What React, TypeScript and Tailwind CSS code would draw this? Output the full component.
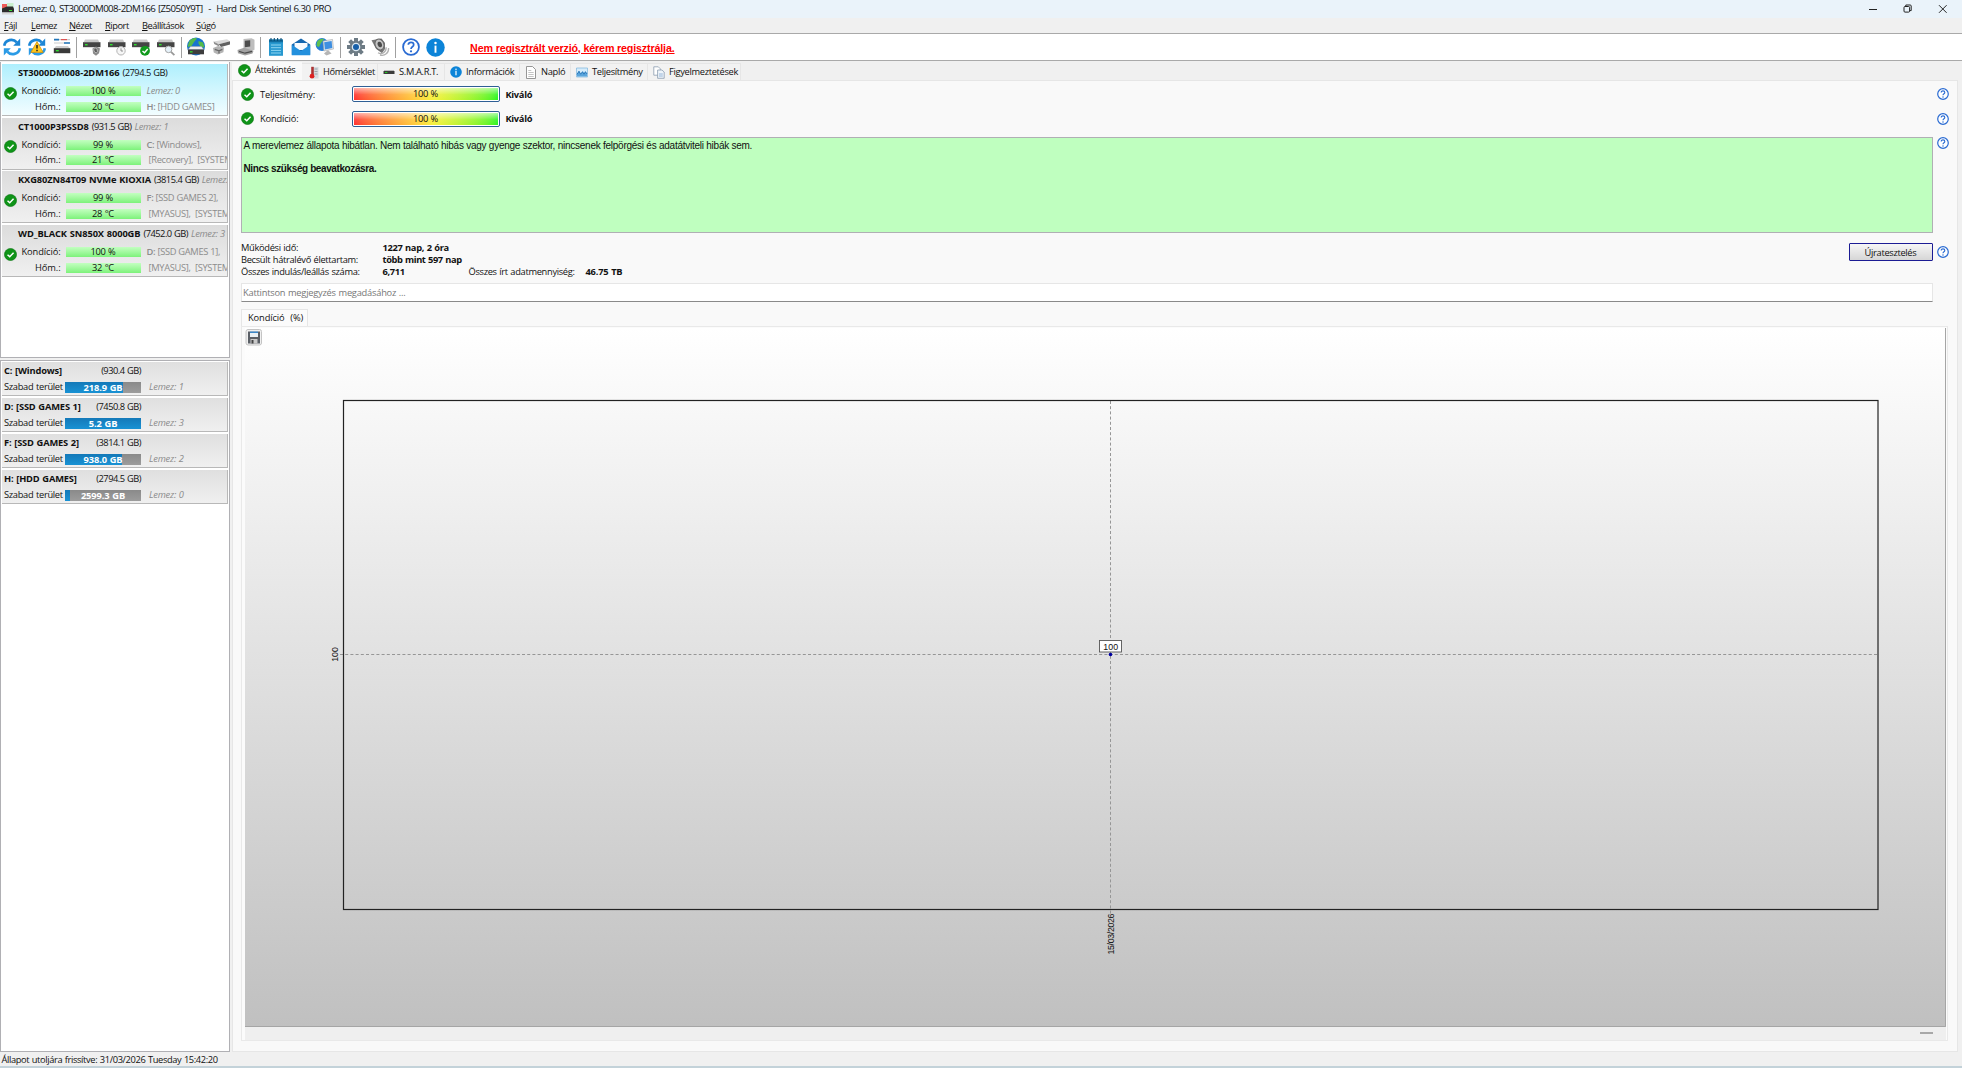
import React from 'react'

type Disk = {
  name: string
  size: string
  tag?: string
  health: string
  temp: string
  letter: string
  label: string
  extra?: string
  active?: boolean
}

const disks: Disk[] = [
  { name: 'ST3000DM008-2DM166', size: '(2794.5 GB)', health: '100 %', temp: '20 °C', letter: 'H:', label: '[HDD GAMES]', active: true },
  { name: 'CT1000P3PSSD8', size: '(931.5 GB)', tag: 'Lemez: 1', health: '99 %', temp: '21 °C', letter: 'C:', label: '[Windows],', extra: '[Recovery],  [SYSTEM]' },
  { name: 'KXG80ZN84T09 NVMe KIOXIA', size: '(3815.4 GB)', tag: 'Lemez: 2', health: '99 %', temp: '28 °C', letter: 'F:', label: '[SSD GAMES 2],', extra: '[MYASUS],  [SYSTEM]' },
  { name: 'WD_BLACK SN850X 8000GB', size: '(7452.0 GB)', tag: 'Lemez: 3', health: '100 %', temp: '32 °C', letter: 'D:', label: '[SSD GAMES 1],', extra: '[MYASUS],  [SYSTEM]' },
]

const volumes = [
  { name: 'C: [Windows]', size: '(930.4 GB)', free: '218.9 GB', used: 76.5, disk: 'Lemez: 1' },
  { name: 'D: [SSD GAMES 1]', size: '(7450.8 GB)', free: '5.2 GB', used: 100, disk: 'Lemez: 3' },
  { name: 'F: [SSD GAMES 2]', size: '(3814.1 GB)', free: '938.0 GB', used: 75, disk: 'Lemez: 2' },
  { name: 'H: [HDD GAMES]', size: '(2794.5 GB)', free: '2599.3 GB', used: 7, disk: 'Lemez: 0' },
]

const menu = [
  { text: 'Fájl', cls: 'w-[27px]' },
  { text: 'Lemez', cls: 'w-[38px]' },
  { text: 'Nézet', cls: 'w-[36px]' },
  { text: 'Riport', cls: 'w-[37px]' },
  { text: 'Beállítások', cls: 'w-[54px]' },
  { text: 'Súgó', cls: 'w-[30px]' },
]

function Check({ size = 14 }: { size?: number }) {
  return (
    <svg width={size} height={size} viewBox="0 0 14 14" className="shrink-0">
      <circle cx="7" cy="7" r="6.5" fill="#0f9418" stroke="#08750f" strokeWidth="0.7" />
      <path d="M3.8 7.2 6.2 9.4 10.3 5" fill="none" stroke="#fff" strokeWidth="1.6" />
    </svg>
  )
}

function Help({ size = 12 }: { size?: number }) {
  return (
    <svg width={size} height={size} viewBox="0 0 20 20" className="shrink-0">
      <circle cx="10" cy="10" r="8.8" fill="#fff" stroke="#2a6bd2" strokeWidth="2" />
      <path d="M7 7.6C7 3.8 13 4 13 7.4 13 9.8 10 9.6 10 12.2" fill="none" stroke="#2a6bd2" strokeWidth="1.9" />
      <circle cx="10" cy="14.8" r="1.25" fill="#2a6bd2" />
    </svg>
  )
}

function Info({ size = 19 }: { size?: number }) {
  return (
    <svg width={size} height={size} viewBox="0 0 20 20" className="shrink-0">
      <circle cx="10" cy="10" r="9.7" fill="#0c84d8" />
      <circle cx="10" cy="5.3" r="1.3" fill="#fff" />
      <path d="M10 8v7.5" stroke="#fff" strokeWidth="2" />
    </svg>
  )
}

function Svg({ children }: { children: React.ReactNode }) {
  return (
    <svg width="20" height="20" viewBox="0 0 20 20" className="shrink-0">
      {children}
    </svg>
  )
}

const syncArrows = (
  <>
    <path d="M2.2 8.8C3.2 2.6 11 1 14.8 5.4" fill="none" stroke="#1c86d6" strokeWidth="2.6" />
    <path d="M18.2 1.6v7.2h-7z" fill="#1c86d6" />
    <path d="M17.8 11.2C16.8 17.4 9 19 5.2 14.6" fill="none" stroke="#2b9be6" strokeWidth="2.6" />
    <path d="M1.8 18.4v-7.2h7z" fill="#2b9be6" />
  </>
)

const drive = (
  <>
    <path d="M3 2.5h13l1.5 3H1.5z" fill="#c9c9c9" />
    <path d="M1 5.2h17.5v5H1z" fill="#454545" />
    <path d="M3 7h2.6v1.4H3z" fill="#2fe02f" />
  </>
)

const toolbar: (React.ReactNode | null)[] = [
  <Svg>{syncArrows}</Svg>,
  <Svg>
    {syncArrows}
    <path d="M10 4.6 16.2 15.4H3.8z" fill="#ffc61a" stroke="#d08a00" strokeWidth="0.7" />
    <path d="M10 8v3.6M10 12.8v1.5" stroke="#222" strokeWidth="1.5" />
  </Svg>,
  <Svg>
    <path d="M2 2.6h16M2 6h16" stroke="#ccc" strokeWidth="1.2" />
    <path d="M2 2.6h5M12 6h6" stroke="#2277bb" strokeWidth="1.6" />
    <path d="M9 2.6h6" stroke="#d55" strokeWidth="1.2" />
    <path d="M4 9h12l2 2.5H2z" fill="#d0d0d0" />
    <path d="M1.8 11.2h16.5v5H1.8z" fill="#3a3a3a" />
    <path d="M3.8 13h3v1.4h-3z" fill="#2fe02f" />
  </Svg>,
  null,
  <Svg>
    {drive}
    <path d="M10.5 11.5l3.5-2 4 2-1 4.8-3 2.4-3-2.2z" fill="#8a8a8a" />
    <ellipse cx="13.6" cy="13.3" rx="1.7" ry="2.5" fill="#5c5c5c" stroke="#c9c9c9" strokeWidth="0.7" transform="rotate(-20 13.6 13.3)" />
  </Svg>,
  <Svg>
    {drive}
    <circle cx="14" cy="13.8" r="4.2" fill="#f6f6f6" stroke="#b4b4b4" />
    <path d="M14 11.3v2.7h2" fill="none" stroke="#888" strokeWidth="0.9" />
  </Svg>,
  <Svg>
    {drive}
    <circle cx="14" cy="13.8" r="4.9" fill="#109a1c" />
    <path d="M11.5 14l2 1.8 3.2-3.8" fill="none" stroke="#fff" strokeWidth="1.4" />
  </Svg>,
  <Svg>
    {drive}
    <circle cx="12.6" cy="12.4" r="3.3" fill="#e6f2fa" stroke="#a5a5a5" />
    <path d="M15 14.8l3.4 3.4" stroke="#999" strokeWidth="1.8" />
  </Svg>,
  null,
  <Svg>
    <circle cx="10" cy="9.4" r="9" fill="#1873cf" />
    <path d="M3 5C5 1 9 .5 11 1.5L8 5 5.5 9 1.5 10zM12.5 4l4.5 1.5 1.5 5-4-1-2-3z" fill="#55bb4a" />
    <path d="M4.5 9.5h11l2.5 3.2H2z" fill="#efefef" stroke="#999" strokeWidth="0.4" />
    <path d="M2 12.5h16v4.8H2z" fill="#3d3d3d" />
    <path d="M4 14.2h2.6v1.3H4z" fill="#2fe02f" />
  </Svg>,
  <Svg>
    <path d="M2.5 4.5 16 2.2l3 2-11 3z" fill="#d8d8d8" />
    <path d="M7.8 7.2l11.2-3v3.2L10 10z" fill="#606060" />
    <path d="M2.5 4.5l5.3 2.7.4 2.4-5-2.6z" fill="#8e8e8e" />
    <path d="M2 11l5-2 6 1.6-.6 4.6-5.6 2.4-4-2.2z" fill="#b4b4b4" />
    <path d="M3.8 12.4l4.2 1.4 3.4-1.4M8 13.8v2.6" fill="none" stroke="#666" strokeWidth="1.3" />
  </Svg>,
  <Svg>
    <path d="M7.5 2l8-.8 3 1.6v10l-5.5 1.4-5.5-2z" fill="#bdbdbd" />
    <path d="M8.8 3.8l5.4-.6v6.2l-5.4.8z" fill="#4c4c4c" />
    <path d="M1.5 13l6.5-2.2 9.5 3-1 2.8-7.5 2-7-2.4z" fill="#a2a2a2" />
    <path d="M3 14.4l6 1.8 7-1.8" fill="none" stroke="#4a4a4a" strokeWidth="1.2" />
  </Svg>,
  null,
  <Svg>
    <path d="M3 2.5h14v16.3H3z" fill="#2798cf" />
    <path d="M3 2.5h14v2.8H3z" fill="#106c9e" />
    <path d="M5 1v3M8.3 1v3M11.6 1v3M15 1v3" stroke="#0b4d75" strokeWidth="1.1" />
    <path d="M5 8h10M5 10.7h10M5 13.4h10M5 16h10" stroke="#9bdcf5" strokeWidth="0.9" />
  </Svg>,
  <Svg>
    <path d="M.8 7.6 10 1.4l9.2 6.2v10.2H.8z" fill="#1467b0" />
    <path d="M3.5 6h13v7h-13z" fill="#f7fbff" />
    <path d="M.8 7.8 10 14l9.2-6.2v10.4H.8z" fill="#2390dd" />
  </Svg>,
  <Svg>
    <circle cx="7" cy="7.5" r="6.4" fill="#267ed6" />
    <path d="M2 5c2-3.5 5-3.8 7-3L6 6l-2 4-2.5-1z" fill="#5fc04f" />
    <path d="M8 4l9.5-1.6 1 9.6-9.6 2z" fill="#e3e9ef" stroke="#999" strokeWidth="0.5" />
    <path d="M9.2 5.2l7.4-1.2.7 7-7.4 1.5z" fill="#3f8fe0" />
    <path d="M13 13l3.5 3.6-5 2-2.5-2z" fill="#b5b5b5" />
  </Svg>,
  null,
  <Svg>
    <path d="M8 1h4v18H8zM1 8h18v4H1z" fill="#6d7b85" />
    <path d="M8 1h4v18H8zM1 8h18v4H1z" fill="#6d7b85" transform="rotate(45 10 10)" />
    <circle cx="10" cy="10" r="5.3" fill="#dce9f2" stroke="#6d7b85" strokeWidth="2" />
    <circle cx="10" cy="10" r="3" fill="#175fa8" />
  </Svg>,
  <Svg>
    <path d="M1.5 3.2l10-1.8 3.5 4.6v6l-3 4.2-6-4.5z" fill="#777" />
    <ellipse cx="9.5" cy="7.5" rx="4.4" ry="5.6" fill="#c4c4c4" stroke="#666" transform="rotate(-20 9.5 7.5)" />
    <ellipse cx="9.8" cy="7.5" rx="2.1" ry="2.9" fill="#4a4a4a" transform="rotate(-20 9.8 7.5)" />
    <path d="M8 15.8c4 2.2 8.4-.8 8.2-5.6M10 18c5 1.3 8.8-2 8.6-7" fill="none" stroke="#b0b0b0" strokeWidth="1.3" />
  </Svg>,
  null,
  <Help size={18} />,
  <Info size={19} />,
]

function Toolbar() {
  return (
    <div className="flex h-[28px] shrink-0 items-center border-y border-[#a9a9a9] bg-white">
      {toolbar.map((icon, i) =>
        icon ? (
          <div key={i} className="flex w-[24.66px] shrink-0 justify-center">{icon}</div>
        ) : (
          <div key={i} className="flex w-[5.7px] shrink-0 justify-center">
            <div className="h-[21px] w-px bg-[#a0a0a0]" />
          </div>
        ),
      )}
      <a className="ml-[22.5px] mt-[3px] font-['Liberation_Sans'] text-[10.7px] font-bold leading-none tracking-[-0.15px] text-[#f00] underline [word-spacing:0]">
        Nem regisztrált verzió, kérem regisztrálja.
      </a>
    </div>
  )
}

function GreenBar({ children }: { children: React.ReactNode }) {
  return (
    <div className="ml-[5px] h-[10px] w-[75px] bg-linear-to-b from-[#c2ffc0] to-[#7cf27a] text-center leading-[10px]">
      {children}
    </div>
  )
}

function DiskCard({ disk }: { disk: Disk }) {
  return (
    <div
      className={`mb-[1.7px] h-[52px] overflow-hidden whitespace-pre border-b border-r border-[#b8b8b8] ${
        disk.active ? 'bg-linear-to-b from-[#aeeffd] to-[#f2fdff]' : 'bg-linear-to-b from-[#dcdcdc] to-[#f0f0f0]'
      }`}
    >
      <div className="flex h-[17px] items-center gap-[3px] pl-[16px]">
        <b className="tracking-[-0.1px]">{disk.name}</b>
        <span className="tracking-[-0.5px]">{disk.size}</span>
        {disk.tag && <i className="text-[#8c8c8c]">{disk.tag}</i>}
      </div>
      <div className="flex h-[32px] pl-[1.5px] pt-[2px]">
        <div className="flex w-[13px] shrink-0 items-center pb-[10px]">
          <Check size={13} />
        </div>
        <div className="w-[44px] shrink-0 text-right leading-[15.5px] tracking-[-0.1px]">
          <div>Kondíció:</div>
          <div>Hőm.:</div>
        </div>
        <div className="flex shrink-0 flex-col gap-[5.5px] pt-[3px]">
          <GreenBar>{disk.health}</GreenBar>
          <GreenBar>{disk.temp}</GreenBar>
        </div>
        <div className="ml-[6px] leading-[15.5px] tracking-[-0.3px] text-[#8c8c8c] [word-spacing:0]">
          {disk.extra ? (
            <>
              <div><b className="font-semibold">{disk.letter}</b> {disk.label}</div>
              <div className="pl-[2px]">{disk.extra}</div>
            </>
          ) : (
            <>
              <div className="italic">Lemez: 0</div>
              <div><b className="font-semibold">{disk.letter}</b> {disk.label}</div>
            </>
          )}
        </div>
      </div>
    </div>
  )
}

function VolumeCard({ volume }: { volume: (typeof volumes)[number] }) {
  return (
    <div className="mb-[2px] h-[34px] border-b border-r border-[#b8b8b8] bg-linear-to-b from-[#dfdfdf] to-[#f0f0f0] pl-[2px]">
      <div className="flex h-[17px] w-[137px] items-center justify-between">
        <b className="tracking-[-0.15px]">{volume.name}</b>
        <span className="tracking-[-0.5px]">{volume.size}</span>
      </div>
      <div className="flex h-[16px] items-center">
        <span className="w-[61px] shrink-0 whitespace-nowrap tracking-[-0.3px]">Szabad terület</span>
        <div className="relative h-[11px] w-[76px] shrink-0 bg-linear-to-b from-[#8a8a8a] to-[#9c9c9c]">
          <div className="h-full bg-linear-to-b from-[#1479b8] to-[#1992d4]" style={{ width: `${volume.used}%` }} />
          <b className="absolute inset-0 text-center leading-[11px] tracking-[-0.1px] text-white">{volume.free}</b>
        </div>
        <i className="ml-[8px] tracking-[-0.2px] text-[#8c8c8c]">{volume.disk}</i>
      </div>
    </div>
  )
}

function Sidebar() {
  return (
    <aside className="flex w-[230px] shrink-0 flex-col gap-[2px]">
      <div className="h-[296px] border border-t-0 border-[#b0b0b4] bg-white pl-px pr-px pt-[2px]">
        {disks.map((d) => <DiskCard key={d.name} disk={d} />)}
      </div>
      <div className="flex-1 border border-[#b0b0b4] bg-white pl-px pr-px pt-px">
        {volumes.map((v) => <VolumeCard key={v.name} volume={v} />)}
      </div>
    </aside>
  )
}

const tabs = [
  {
    text: 'Hőmérséklet',
    cls: 'w-[76px]',
    icon: (
      <svg width="12" height="13" viewBox="1 0 12 13" className="shrink-0">
        <path d="M7 1h5.5v11.5H7z" fill="#d4dade" />
        <path d="M8.5 3h3M8.5 5.5h3M8.5 8h3" stroke="#8d979e" strokeWidth="0.8" />
        <path d="M6.5.8v8" stroke="#a33" strokeWidth="2.6" />
        <circle cx="6" cy="10.2" r="2.4" fill="#d22" />
      </svg>
    ),
  },
  {
    text: 'S.M.A.R.T.',
    cls: 'w-[67px]',
    icon: (
      <svg width="12" height="13" viewBox="0 0 12 13" className="shrink-0">
        <path d="M1 4h10v1H1z" fill="#bbb" />
        <path d="M.5 5h11v3H.5z" fill="#3c3c3c" />
        <path d="M2 6h2.4v1H2z" fill="#2c2" />
      </svg>
    ),
  },
  { text: 'Információk', cls: 'w-[75px]', icon: <Info size={12} /> },
  {
    text: 'Napló',
    cls: 'w-[51px]',
    icon: (
      <svg width="12" height="13" viewBox="0 0 12 13" className="shrink-0">
        <path d="M1.5.5h6l3 3v9h-9z" fill="#fff" stroke="#8a8a8a" strokeWidth="0.9" />
        <path d="M3.3 4.5h3M3.3 6.5h5.4M3.3 8.5h5.4M3.3 10.5h5.4" stroke="#aaa" strokeWidth="0.7" />
      </svg>
    ),
  },
  {
    text: 'Teljesítmény',
    cls: 'w-[77px]',
    icon: (
      <svg width="12" height="13" viewBox="0 0 12 13" className="shrink-0">
        <path d="M.5 2h11v9H.5z" fill="#d5ecfb" stroke="#7db4dc" strokeWidth="0.7" />
        <path d="M1 10.6V8l2-3 1.6 3 2-2.5L8 8l1.4-2.5L11 8v2.6z" fill="#5aa5dc" />
        <path d="M1 8.4l2-3.2 1.6 3 2-2.5L8 8.2l1.4-2.5L11 8" fill="none" stroke="#1d6fb5" strokeWidth="0.9" />
      </svg>
    ),
  },
  {
    text: 'Figyelmeztetések',
    cls: 'w-[93px]',
    icon: (
      <svg width="12" height="13" viewBox="0 0 12 13" className="shrink-0">
        <path d="M.8.8h4.5l2 2v6.4H.8z" fill="#fff" stroke="#8a9cb0" strokeWidth="0.8" />
        <path d="M4.6 4h4.3l2.3 2v6.3H4.6z" fill="#eef4fa" stroke="#8a9cb0" strokeWidth="0.8" />
        <path d="M6 8h3.8M6 10h3.8" stroke="#7fa6d0" strokeWidth="0.8" />
      </svg>
    ),
  },
]

function Tabs() {
  return (
    <div className="flex h-[18px] items-end">
      <div className="flex h-[18px] w-[70px] items-center gap-[4px] bg-[#f9f9f9] pb-[2px] pl-[6px]">
        <Check size={13} />
        <span>Áttekintés</span>
      </div>
      {tabs.map((t) => (
        <div key={t.text} className={`flex h-[17px] shrink-0 items-center gap-[4px] border-r border-t border-[#e6e6e6] bg-[#f2f2f2] pl-[5px] ${t.cls}`}>
          {t.icon}
          <span>{t.text}</span>
        </div>
      ))}
    </div>
  )
}

function Meter({ label }: { label: string }) {
  return (
    <div className="flex h-[24.5px] items-center">
      <Check size={13} />
      <span className="ml-[6px] w-[91.5px] tracking-[-0.15px]">{label}</span>
      <div className="h-[16px] w-[148px] rounded-[2px] border border-[#2f5f95] bg-white p-px">
        <div className="h-full bg-linear-to-r from-[#ff3030] via-[#f6f03c] via-55% to-[#22f522]">
          <div className="h-full bg-linear-to-b from-white/60 via-white/10 via-55% to-transparent text-center leading-[12px]">100 %</div>
        </div>
      </div>
      <b className="ml-[6px]">Kiváló</b>
      <div className="ml-auto mr-[8.5px]"><Help /></div>
    </div>
  )
}

function Chart() {
  return (
    <svg width="1701" height="699" viewBox="245 328 1701 699" className="block">
      <defs>
        <linearGradient id="bg" x1="0" y1="0" x2="0" y2="1">
          <stop offset="0" stopColor="#ffffff" />
          <stop offset="1" stopColor="#c0c0c0" />
        </linearGradient>
      </defs>
      <rect x="245" y="328" width="1701" height="699" fill="url(#bg)" />
      <path d="M1945.5 328V1026.5H245" fill="none" stroke="#a5a5a5" />
      <rect x="246" y="329.5" width="15.5" height="15.5" rx="2" fill="#f0f0f0" stroke="#c4c4c4" />
      <path d="M248 331.5h12v12h-12z" fill="#5a5f66" />
      <path d="M250 331.5h8v5.5h-8z" fill="#e8f0f6" />
      <path d="M250 331.5h8v1.5h-8z" fill="#3a86c8" />
      <path d="M250.5 339h7v4.5h-7z" fill="#c9c9c9" />
      <path d="M251.5 340h2v3.5h-2z" fill="#444" />
      <path d="M340 654.5H1878M1110.5 401V914" stroke="#969696" strokeDasharray="3 2.2" />
      <rect x="343.5" y="400.5" width="1534.5" height="509" fill="none" stroke="#222" strokeWidth="1.2" />
      <rect x="1099.5" y="640.5" width="22" height="11.5" fill="#fff" stroke="#555" strokeWidth="0.9" />
      <circle cx="1110.5" cy="654.5" r="1.8" fill="#0000a0" />
      <g fontFamily="Liberation Sans, sans-serif" fontSize="8.8" fill="#111" letterSpacing="0">
        <text x="1110.7" y="649.6" textAnchor="middle">100</text>
        <text transform="translate(338.2 654.5) rotate(-90)" textAnchor="middle">100</text>
        <text transform="translate(1113.5 954.5) rotate(-90)" textLength="41">15/03/2026</text>
      </g>
    </svg>
  )
}

function Overview() {
  return (
    <div className="flex flex-1 flex-col border border-[#e6e6e6] bg-[#f9f9f9] pl-[8px] pt-px">
      <Meter label="Teljesítmény:" />
      <Meter label="Kondíció:" />
      <div className="mt-[5.5px] flex items-start">
        <div className="h-[96px] w-[1692px] border border-[#b0b0b4] bg-[#bfffbf] pl-[1.5px] pt-[2px] font-['Liberation_Sans'] text-[10px] leading-[11.6px] [word-spacing:0]">
          <p className="tracking-[-0.25px]">A merevlemez állapota hibátlan. Nem található hibás vagy gyenge szektor, nincsenek felpörgési és adatátviteli hibák sem.</p>
          <p className="mt-[11.5px] font-bold tracking-[-0.4px]">Nincs szükség beavatkozásra.</p>
        </div>
        <div className="ml-[4px]"><Help /></div>
      </div>
      <div className="flex h-[50px] pt-[9px]">
        <div className="grid h-[37px] grid-cols-[141.5px_86px_117px_1fr] leading-[12.2px] whitespace-nowrap">
          <span>Működési idő:</span>
          <b>1227 nap, 2 óra</b>
          <span />
          <span />
          <span>Becsült hátralévő élettartam:</span>
          <b className="tracking-[-0.4px]">több mint 597 nap</b>
          <span />
          <span />
          <span>Összes indulás/leállás száma:</span>
          <b>6,711</b>
          <span>Összes írt adatmennyiség:</span>
          <b className="tracking-[-0.2px]">46.75 TB</b>
        </div>
        <div className="ml-auto mr-[8.5px] flex h-[18px] items-center gap-[4px] pt-[3px]">
          <button className="h-[18px] w-[84px] rounded-[1px] border border-[#1c1c94] bg-linear-to-b from-[#f6f6f6] to-[#d6d6d6] leading-[15px]">
            Újratesztelés
          </button>
          <Help />
        </div>
      </div>
      <div className="h-[19px] w-[1692px] border border-[#e6e6e6] border-b-[#8a8a8a] bg-white pl-[1px] leading-[17px] tracking-[-0.23px] text-[#777]">
        Kattintson megjegyzés megadásához ...
      </div>
      <div className="mt-[7.5px] h-[17px] w-[67px] border border-b-0 border-[#e6e6e6] bg-[#fbfbfb] pl-[6px] leading-[15px] tracking-[-0.1px] whitespace-pre">
        Kondíció  (%)
      </div>
      <div className="w-[1707px] border border-[#e9e9e9] bg-[#fbfbfb] pl-[3px] pt-px">
        <Chart />
        <div className="flex h-[13px] w-[1701px] items-center justify-end bg-[#efefef] pb-px pr-[13px]">
          <div className="h-[2px] w-[13px] bg-[#a8a8a8]" />
        </div>
      </div>
    </div>
  )
}

export default function App() {
  return (
    <div className="flex h-[1068px] w-[1962px] flex-col overflow-hidden bg-[#f0f0f0] font-['Open_Sans','Noto_Sans',sans-serif] text-[9.3px] leading-none tracking-[-0.32px] text-[#111] [word-spacing:0.5px]">
      <header className="flex h-[18px] shrink-0 items-center bg-[#eaf3fa]">
        <svg width="12" height="13" viewBox="0 0 12 13" className="ml-[2px]">
          <path d="M0 1h5v5H0z" fill="#ee5a5a" />
          <path d="M5 0h6.5v6H5z" fill="#c9efcf" />
          <path d="M0 5.5l5-2h6l1 2.5v3.5H0z" fill="#2c2c2c" />
          <path d="M0 9.5h12v2H0z" fill="#d7d7d7" />
          <path d="M7 7h3v1H7z" fill="#3d3" />
        </svg>
        <span className="ml-[4px] whitespace-pre text-[9.7px] tracking-[-0.56px] [word-spacing:0.8px]">Lemez: 0, ST3000DM008-2DM166 [Z5050Y9T]  -  Hard Disk Sentinel 6.30 PRO</span>
        <svg width="90" height="16" viewBox="0 0 90 16" className="ml-auto mr-[10px]" fill="none" stroke="#222" strokeWidth="1">
          <path d="M7 8.5h8" />
          <rect x="42" y="5.5" width="5.6" height="5.6" rx="1" />
          <path d="M43.8 5.4V4h4.4q1 0 1 1v4.6h-1.4" />
          <path d="M77 4.2l7.6 7.6M84.6 4.2 77 11.8" />
        </svg>
      </header>
      <nav className="flex h-[15px] shrink-0 items-center pl-[4px] tracking-[-0.45px]">
        {menu.map((m) => (
          <span key={m.text} className={m.cls}>
            <u>{m.text[0]}</u>{m.text.slice(1)}
          </span>
        ))}
      </nav>
      <Toolbar />
      <main className="flex flex-1 gap-[2px] pt-px">
        <Sidebar />
        <section className="flex w-[1726px] flex-col">
          <Tabs />
          <Overview />
        </section>
      </main>
      <footer className="h-[16px] shrink-0 border-b-2 border-[#c3d2d9] pl-[1.5px] leading-[15px] tracking-[-0.37px]">
        Állapot utoljára frissítve: 31/03/2026 Tuesday 15:42:20
      </footer>
    </div>
  )
}
